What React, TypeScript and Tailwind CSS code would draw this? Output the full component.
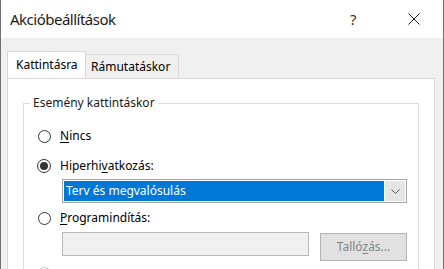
import React from "react";

const font = { fontFamily: '"Noto Sans", "Open Sans", sans-serif' };

function Radio({ checked, disabled }: { checked?: boolean; disabled?: boolean }) {
  return (
    <div className="w-[14px] flex items-center justify-center">
      <div
        className={`${checked ? "w-[14px] h-[14px]" : "w-[13px] h-[13px]"} rounded-full border flex items-center justify-center bg-white ${
          disabled ? "border-[#c6c6c6]" : "border-[#333333]"
        }`}
      >
        {checked && <div className="w-[8px] h-[8px] rounded-full bg-[#333333]" />}
      </div>
    </div>
  );
}

export default function App() {
  return (
    <div
      className="w-[444px] h-[269px] overflow-hidden flex flex-col border-x border-[#707070] bg-[#f0f0f0] text-[12px] leading-[16px] text-black"
      style={font}
    >
      {/* Title bar */}
      <div className="h-[38px] bg-white flex items-center shrink-0">
        <div className="pl-[9px] text-[15px] leading-[20px] tracking-[-0.5px] text-[#1a1a1a]">Akcióbeállítások</div>
        <div className="flex-1" />
        <div className="w-[10px] text-[15px] leading-[20px] text-[#333] mr-[48px]">?</div>
        <svg width="12" height="12" viewBox="0 0 12 12" className="mr-[23px]">
          <path d="M0.5 0.5 L11.5 11.5 M11.5 0.5 L0.5 11.5" stroke="#222" strokeWidth="1" />
        </svg>
      </div>

      {/* Body */}
      <div className="flex-1 flex flex-col pl-[6px] pr-[8px] pt-[14px]">
        {/* Tabs */}
        <div className="flex items-end h-[26px] relative z-10">
          <div className="h-[27px] w-[79px] bg-white border border-b-0 border-[#d9d9d9] pl-[8px] pt-[5px]">
            Kattintásra
          </div>
          <div className="h-[25px] w-[93px] bg-[#f0f0f0] border border-l-0 border-[#d9d9d9] pl-[5px] pt-[4px] mb-[-1px]">
            Rámutatáskor
          </div>
        </div>
        {/* Panel */}
        <div className="flex-1 bg-white border border-[#d9d9d9] px-[15px] pt-[16px]">
          <fieldset className="border border-[#dcdcdc] h-[200px]">
            <legend className="ml-[6px] px-[3px] text-[#1a1a1a]">Esemény kattintáskor</legend>
            <div className="flex flex-col pt-[15px] pl-[13px]">
              <div className="h-[20px] flex items-center gap-[9px]">
                <Radio />
                <span>
                  <span className="underline underline-offset-2">N</span>incs
                </span>
              </div>
              <div className="h-[20px] flex items-center gap-[9px] mt-[10px]">
                <Radio checked />
                <span>
                  Hiperhi<span className="underline underline-offset-2">v</span>atkozás:
                </span>
              </div>
              <div className="ml-[25px] mt-[3px] w-[345px] h-[24px] border border-[#a6a6a6] p-px flex">
                <div className="flex-1 bg-[#0078d7] text-white pl-[2px] leading-[19px]">Terv és megvalósulás</div>
                <div className="w-px bg-white" />
                <div className="w-[20px] bg-[#e5e5e5] flex items-center justify-center">
                  <svg width="9" height="5" viewBox="0 0 9 5">
                    <path d="M0.5 0.5 L4.5 4.5 L8.5 0.5" stroke="#555" strokeWidth="1" fill="none" />
                  </svg>
                </div>
              </div>
              <div className="h-[20px] flex items-center gap-[9px] mt-[5px]">
                <Radio />
                <span>
                  <span className="underline underline-offset-2">P</span>rogramindítás:
                </span>
              </div>
              <div className="ml-[25px] mt-[4px] flex items-start">
                <div className="w-[247px] h-[24px] bg-[#f0f0f0] border border-[#b8b8b8]" />
                <div className="ml-[11px] mt-px w-[87px] h-[28px] bg-[#e1e1e1] border border-[#b4b4b4] text-[#838383] flex items-center justify-center">
                  <span>
                    Talló<span className="underline underline-offset-2">z</span>ás...
                  </span>
                </div>
              </div>
              <div className="h-[20px] flex items-center gap-[9px] mt-[2px]">
                <Radio disabled />
              </div>
            </div>
          </fieldset>
        </div>
      </div>
    </div>
  );
}
